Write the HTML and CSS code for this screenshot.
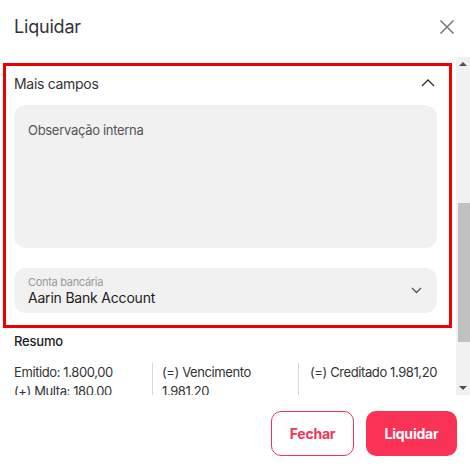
FILE: index.html
```
<!DOCTYPE html>
<html lang="pt-BR">
<head>
<meta charset="utf-8">
<link rel="stylesheet" href="styles.css">
</head>
<body>
<div class="modal">
  <header class="head">
    <h1 class="title">Liquidar</h1>
    <svg class="close" width="16" height="16" viewBox="0 0 16 16"><path d="M1.5 1.5L14.5 14.5M14.5 1.5L1.5 14.5" stroke="#7a7a7a" stroke-width="1.6" fill="none"/></svg>
  </header>
  <div class="scroll">
    <div class="content">
      <section class="more">
        <div class="more-head">
          <span>Mais campos</span>
          <svg class="chev-up" width="14" height="8" viewBox="0 0 14 8"><path d="M1 7L7 1L13 7" stroke="#333" stroke-width="1.3" fill="none"/></svg>
        </div>
        <div class="textarea">Observação interna</div>
        <div class="select">
          <div class="sel-text">
            <span class="sel-label">Conta bancária</span>
            <span class="sel-value">Aarin Bank Account</span>
          </div>
          <svg class="chev-down" width="11" height="7" viewBox="0 0 11 7"><path d="M1 1L5.5 5.5L10 1" stroke="#555" stroke-width="1.3" fill="none"/></svg>
        </div>
      </section>
      <section class="summary">
        <h2 class="sum-title">Resumo</h2>
        <div class="sum-grid">
          <div class="col c1"><p>Emitido: 1.800,00</p><p>(+) Multa: 180,00</p></div>
          <div class="col c2"><p>(=) Vencimento 1.981,20</p></div>
          <div class="col c3"><p>(=) Creditado 1.981,20</p></div>
        </div>
      </section>
    </div>
    <div class="scrollbar">
      <div class="arrow up"></div>
      <div class="track"><div class="thumb"></div></div>
      <div class="arrow down"></div>
    </div>
  </div>
  <footer class="foot">
    <button class="btn outline">Fechar</button>
    <button class="btn solid">Liquidar</button>
  </footer>
</div>
</body>
</html>
```
FILE: styles.css
```
* { box-sizing: border-box; }
html, body { margin: 0; padding: 0; background: #fff; }
body { font-family: Inter, "Noto Sans", sans-serif; color: #333; width: 470px; height: 468px; overflow: hidden; }
.modal { width: 470px; height: 468px; display: flex; flex-direction: column; }
.head { height: 57px; display: flex; align-items: center; justify-content: space-between; padding: 0 15px 4px 14px; }
.title { margin: 0; font-size: 18px; font-weight: 400; color: #333; letter-spacing: -0.2px; }
.close { display: block; }
.scroll { height: 338px; display: flex; }
.content { flex: 1; overflow: hidden; padding: 6px 4px 0 3px; }
.more { border: 3px solid #ee0000; padding: 0 12px 12px 8px; }
.more-head { display: flex; align-items: center; justify-content: space-between; padding: 9px 2px 0 0; height: 27px; font-size: 14px; color: #333; letter-spacing: -0.3px; }
.more-head span { line-height: 18px; }
.chev-up { display: block; margin-top: -2px; }
.textarea { margin-top: 12px; height: 143px; background: #f1f1f1; border-radius: 12px; padding: 16px 14px; font-size: 13px; line-height: 18px; color: #555; letter-spacing: -0.3px; }
.select { margin-top: 20px; height: 45px; background: #f1f1f1; border-radius: 12px; padding: 0 15px 0 14px; display: flex; align-items: center; justify-content: space-between; }
.sel-text { display: flex; flex-direction: column; }
.sel-label { font-size: 11px; line-height: 14px; color: #9a9a9a; letter-spacing: -0.3px; }
.sel-value { font-size: 14px; line-height: 17px; color: #222; letter-spacing: -0.2px; }
.chev-down { display: block; }
.summary { padding: 4px 0 0 11px; }
.sum-title { margin: 0; font-size: 13px; font-weight: 500; line-height: 18px; color: #222; letter-spacing: -0.2px; }
.sum-grid { margin-top: 13px; display: grid; grid-template-columns: 138px 146px 1fr; }
.col { font-size: 13px; line-height: 19px; color: #333; letter-spacing: -0.4px; min-height: 40px; }
.col p { margin: 0; }
.c1 { padding: 0 6px 0 0; }
.c2 { border-left: 1px solid #d6d6d6; padding: 0 14px 0 9px; }
.c3 { border-left: 1px solid #d6d6d6; padding: 0 0 0 11px; white-space: nowrap; }
.scrollbar { width: 14px; background: #f1f1f1; display: flex; flex-direction: column; }
.arrow { height: 14px; display: flex; align-items: center; justify-content: center; }
.arrow::before { content: ""; width: 0; height: 0; border-left: 4px solid transparent; border-right: 4px solid transparent; }
.arrow.up::before { border-bottom: 4px solid #505050; }
.arrow.down::before { border-top: 4px solid #505050; }
.track { flex: 1; padding-top: 132px; padding-bottom: 39px; display: flex; }
.thumb { flex: 1; background: #c1c1c1; margin-left: 2px; }
.foot { flex: 1; display: flex; justify-content: flex-end; align-items: flex-start; gap: 12px; padding: 16px 13px 0 0; }
.btn { height: 45px; border-radius: 10px; font-family: Inter, sans-serif; font-size: 14px; font-weight: 700; letter-spacing: -0.2px; cursor: pointer; }
.outline { width: 83px; background: #fff; color: #f23459; border: 1px solid #f23459; }
.solid { width: 91px; background: #f93256; color: #fff; border: none; }
```
